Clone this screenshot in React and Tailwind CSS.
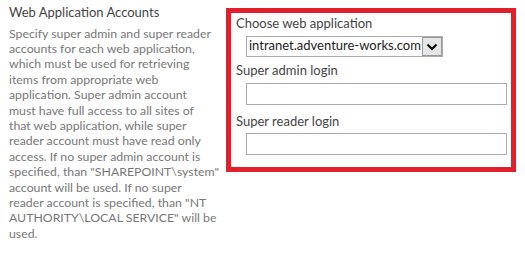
const lines = [
  "Specify super admin and super reader",
  "accounts for each web application,",
  "which must be used for retrieving",
  "items from appropriate web",
  "application. Super admin account",
  "must have full access to all sites of",
  "that web application, while super",
  "reader account must have read only",
  "access. If no super admin account is",
  'specified, than "SHAREPOINT\\system"',
  "account will be used. If no super",
  'reader account is specified, than "NT',
  'AUTHORITY\\LOCAL SERVICE" will be',
  "used.",
];

export default function App() {
  const font = { fontFamily: 'Lato, "Open Sans", sans-serif' };
  return (
    <div className="w-[525px] h-[253px] bg-white flex" style={font}>
      <div className="w-[226px] pl-[9px] pt-[3px] pr-[6px]">
        <div className="text-[13px] leading-[18px] text-[#444444]">Web Application Accounts</div>
        <p className="mt-[4.5px] text-[12.3px] leading-[15.4px] text-[#777777]">
          {lines.map((l, i) => (
            <span key={i} className="block whitespace-nowrap">{l}</span>
          ))}
        </p>
      </div>
      <div className="mt-[8px] w-[290px] h-[164px] border-[5px] border-[#e0202a] pl-[5px] pr-[4px] pt-[1px] text-[#444444]">
        <div className="text-[13px] leading-[18px]">Choose web application</div>
        <div className="ml-[10px] mt-[4px] flex h-[21px] w-[197px] border border-[#ababab]">
          <div className="flex-1 pl-[2px] text-[13px] leading-[17px] text-[#222222] whitespace-nowrap overflow-hidden">intranet.adventure-works.com</div>
          <div className="w-[20px] border border-[#999999] bg-[#e6e6e6] flex items-center justify-center">
            <svg width="12" height="8" viewBox="0 0 12 8"><path d="M1.5 1.5 L6 6 L10.5 1.5" fill="none" stroke="#000" strokeWidth="2" /></svg>
          </div>
        </div>
        <div className="mt-[4px] text-[13px] leading-[18px]">Super admin login</div>
        <div className="ml-[10px] mt-[4px] h-[22px] w-[261px] border border-[#ababab]"></div>
        <div className="mt-[7px] text-[13px] leading-[18px]">Super reader login</div>
        <div className="ml-[10px] mt-[3px] h-[22px] w-[261px] border border-[#ababab]"></div>
      </div>
    </div>
  );
}
